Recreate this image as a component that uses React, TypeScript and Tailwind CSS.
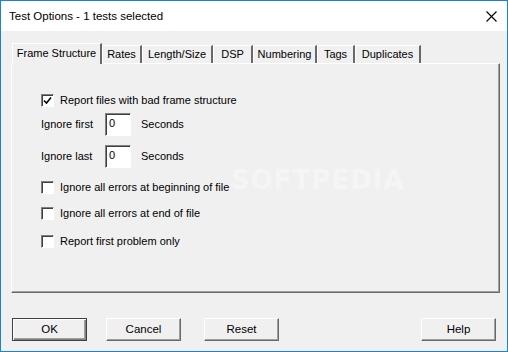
import React from "react";

const tabs = [
  { label: "Frame Structure", w: "w-[90px]" },
  { label: "Rates", w: "w-[40px]" },
  { label: "Length/Size", w: "w-[71px]" },
  { label: "DSP", w: "w-[40px]" },
  { label: "Numbering", w: "w-[64px]" },
  { label: "Tags", w: "w-[38px]" },
  { label: "Duplicates", w: "w-[66px]" },
];

function CheckBox({ checked, label, className }: { checked?: boolean; label: string; className?: string }) {
  return (
    <div className={`flex items-center gap-[6px] ${className ?? ""}`}>
      <div className="w-[13px] h-[13px] border border-t-[#808080] border-l-[#808080] border-r-white border-b-white bg-white shadow-[inset_1px_1px_0_#404040] flex items-center justify-center">
        {checked && (
          <svg width="9" height="9" viewBox="0 0 9 9">
            <path d="M1 4.5 L3.5 7 L8 1.5" fill="none" stroke="#000" strokeWidth="1.6" />
          </svg>
        )}
      </div>
      <span className="leading-[13px]">{label}</span>
    </div>
  );
}

function NumField({ label, className }: { label: string; className?: string }) {
  return (
    <div className={`flex items-center ${className ?? ""}`}>
      <span className="w-[64px]">{label}</span>
      <div className="w-[26px] h-[23px] border border-t-[#808080] border-l-[#808080] border-r-white border-b-white bg-white shadow-[inset_1px_1px_0_#404040] pl-[3px] pt-[1px] leading-[16px]">
        0
      </div>
      <span className="ml-[10px]">Seconds</span>
    </div>
  );
}

function Btn({ label, def }: { label: string; def?: boolean }) {
  const cls = def
    ? "border border-[#404040] shadow-[inset_1px_1px_0_#fff,inset_-1px_-1px_0_#808080,inset_-2px_-2px_0_#a0a0a0]"
    : "border border-t-white border-l-white border-r-[#696969] border-b-[#696969] shadow-[inset_-1px_-1px_0_#a0a0a0]";
  return (
    <div className={`w-[75px] h-[23px] flex items-center justify-center bg-[#f0f0f0] text-[11.5px] text-black ${cls}`}>
      {label}
    </div>
  );
}

export default function App() {
  return (
    <div className="w-[508px] h-[352px] border border-[#1883d7] bg-[#f0f0f0] flex flex-col text-[11px] text-black font-['Liberation_Sans',Arial,sans-serif] overflow-hidden relative">
      <div className="h-[30px] bg-white flex items-center justify-between pl-[8px] pr-[10px]">
        <span className="text-[11.5px] pt-[1px]">Test Options - 1 tests selected</span>
        <svg width="11" height="11" viewBox="0 0 11 11">
          <path d="M0.5 0.5 L10.5 10.5 M10.5 0.5 L0.5 10.5" stroke="#000" strokeWidth="1.1" />
        </svg>
      </div>

      <div className="flex-1 flex flex-col pl-[10px] pr-[8px]">
        <div className="flex items-end h-[32px] pl-[1px]">
          {tabs.map((t, i) =>
            i === 0 ? (
              <div
                key={t.label}
                className={`${t.w} h-[21px] mb-[-1px] relative z-10 bg-[#f0f0f0] border-t border-l border-white border-r-2 border-r-[#696969] flex items-center justify-center pb-[2px]`}
              >
                {t.label}
              </div>
            ) : (
              <div
                key={t.label}
                className={`${t.w} h-[18px] border-t border-l border-white border-r-2 border-r-[#696969] flex items-center justify-center`}
              >
                {t.label}
              </div>
            )
          )}
        </div>

        <div className="w-[489px] h-[230px] border-t border-l border-white border-r border-b border-r-[#696969] border-b-[#696969] shadow-[inset_-1px_-1px_0_#a0a0a0] flex flex-col pl-[29px]">
          <CheckBox checked label="Report files with bad frame structure" className="mt-[30px]" />
          <NumField label="Ignore first" className="mt-[6px]" />
          <NumField label="Ignore last" className="mt-[9px]" />
          <CheckBox label="Ignore all errors at beginning of file" className="mt-[13px]" />
          <CheckBox label="Ignore all errors at end of file" className="mt-[13px]" />
          <CheckBox label="Report first problem only" className="mt-[15px]" />
        </div>

        <div className="flex items-center mt-[25px] pl-[1px]">
          <Btn label="OK" def />
          <div className="ml-[19px]">
            <Btn label="Cancel" />
          </div>
          <div className="ml-[23px]">
            <Btn label="Reset" />
          </div>
          <div className="ml-auto mr-[3px]">
            <Btn label="Help" />
          </div>
        </div>
      </div>

      <div className="absolute left-[230px] top-[160px] text-[26px] font-bold tracking-[1px] text-white/35 pointer-events-none font-['DejaVu_Sans',sans-serif]">
        SOFTPEDIA
      </div>
    </div>
  );
}
